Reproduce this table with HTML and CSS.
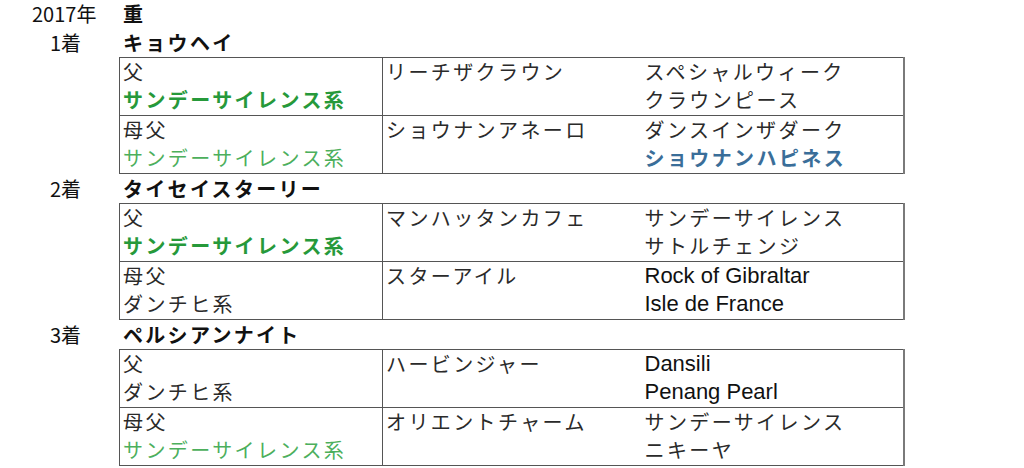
FILE: index.html
```html
<!DOCTYPE html>
<html lang="ja">
<head>
<meta charset="utf-8">
<title>2017年 重</title>
<link rel="stylesheet" href="styles.css">
</head>
<body>
<div class="page">
  <div class="line first">
    <span class="lbl year">2017年</span>
    <span class="name">重</span>
  </div>

  <section class="place">
    <div class="line">
      <span class="lbl">1着</span>
      <span class="name">キョウヘイ</span>
    </div>
    <table class="ped">
      <colgroup><col class="k1"><col class="k2"><col class="k3"></colgroup>
      <tr>
        <td class="c1">父<br><span class="ss strong">サンデーサイレンス系</span></td>
        <td class="c2">リーチザクラウン</td>
        <td class="c3">スペシャルウィーク<br>クラウンピース</td>
      </tr>
      <tr>
        <td class="c1">母父<br><span class="ss">サンデーサイレンス系</span></td>
        <td class="c2">ショウナンアネーロ</td>
        <td class="c3">ダンスインザダーク<br><span class="blue">ショウナンハピネス</span></td>
      </tr>
    </table>
  </section>

  <section class="place">
    <div class="line">
      <span class="lbl">2着</span>
      <span class="name">タイセイスターリー</span>
    </div>
    <table class="ped">
      <colgroup><col class="k1"><col class="k2"><col class="k3"></colgroup>
      <tr>
        <td class="c1">父<br><span class="ss strong">サンデーサイレンス系</span></td>
        <td class="c2">マンハッタンカフェ</td>
        <td class="c3">サンデーサイレンス<br>サトルチェンジ</td>
      </tr>
      <tr>
        <td class="c1">母父<br>ダンチヒ系</td>
        <td class="c2">スターアイル</td>
        <td class="c3"><span class="lat">Rock of Gibraltar</span><br><span class="lat">Isle de France</span></td>
      </tr>
    </table>
  </section>

  <section class="place">
    <div class="line">
      <span class="lbl">3着</span>
      <span class="name">ペルシアンナイト</span>
    </div>
    <table class="ped">
      <colgroup><col class="k1"><col class="k2"><col class="k3"></colgroup>
      <tr>
        <td class="c1">父<br>ダンチヒ系</td>
        <td class="c2">ハービンジャー</td>
        <td class="c3"><span class="lat">Dansili</span><br><span class="lat">Penang Pearl</span></td>
      </tr>
      <tr>
        <td class="c1">母父<br><span class="ss">サンデーサイレンス系</span></td>
        <td class="c2">オリエントチャーム</td>
        <td class="c3">サンデーサイレンス<br>ニキーヤ</td>
      </tr>
    </table>
  </section>
</div>
</body>
</html>
```

FILE: styles.css
```css
html, body {
  margin: 0;
  padding: 0;
  background: #ffffff;
}

body {
  font-family: "Noto Sans CJK JP", "Liberation Sans", sans-serif;
  color: #1a1a1a;
}

.page {
  width: 1024px;
}

.line {
  display: flex;
  height: 29px;
  line-height: 29px;
  font-size: 20px;
}

.line.first {
  height: 28px;
  line-height: 28px;
}

.lbl {
  box-sizing: border-box;
  width: 123px;
  padding-left: 50px;
  font-family: "Noto Sans CJK JP", sans-serif;
  color: #111;
}

.lbl.year {
  padding-left: 32px;
}

.name {
  font-weight: bold;
  letter-spacing: 2.3px;
  color: #111;
}

.ped {
  margin-left: 119px;
  width: 786px;
  border-collapse: collapse;
  table-layout: fixed;
}

.ped col.k1 {
  width: 263px;
}

.ped col.k2 {
  width: 259px;
}

.ped td {
  border-top: 1px solid #555;
  border-bottom: 1px solid #555;
  padding: 0 0 1px 3px;
  vertical-align: top;
  font-size: 20px;
  line-height: 28px;
  letter-spacing: 2.4px;
  white-space: nowrap;
  overflow: hidden;
  color: #2a2a2a;
}

.ped td.c1 {
  border-left: 1px solid #555;
  border-right: 1px solid #555;
}

.ped td.c3 {
  border-right: 2px solid #7a7a7a;
}

.ss {
  color: #4caf5c;
}

.ss.strong {
  color: #26993a;
  font-weight: bold;
}

.blue {
  color: #3a6e99;
  font-weight: bold;
}

.lat {
  font-family: "Liberation Sans", sans-serif;
  font-size: 22px;
  line-height: 28px;
  vertical-align: top;
  letter-spacing: 0;
  color: #111;
}
```
